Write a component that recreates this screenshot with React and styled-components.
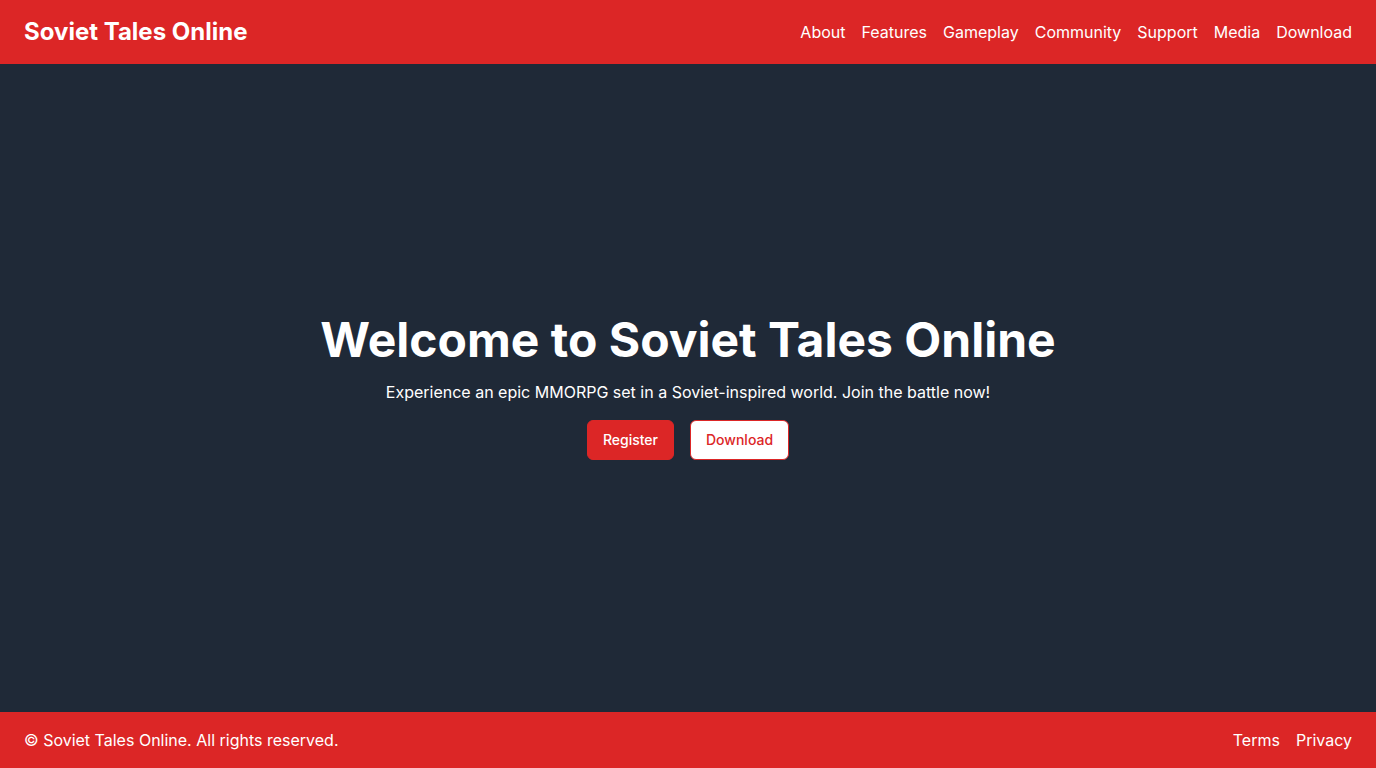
import React from "react";
import styled, { createGlobalStyle } from "styled-components";

const Global = createGlobalStyle`
  html, body { margin: 0; padding: 0; }
  body { font-family: Inter, "Noto Sans", sans-serif; color: #fff; background: #1f2937; }
  * { box-sizing: border-box; }
`;

const Page = styled.div`
  display: flex;
  flex-direction: column;
  min-height: 100vh;
`;

const Header = styled.header`
  height: 64px;
  background: #dc2626;
  display: flex;
  align-items: center;
  justify-content: space-between;
  padding: 0 24px;
`;

const Brand = styled.div`
  font-size: 24px;
  font-weight: 700;
  line-height: 32px;
`;

const Nav = styled.nav`
  display: flex;
  gap: 16px;
`;

const NavLink = styled.a`
  color: #fff;
  text-decoration: none;
  font-size: 16px;
  line-height: 24px;
`;

const Hero = styled.main`
  flex: 1;
  display: flex;
  flex-direction: column;
  align-items: center;
  justify-content: center;
  text-align: center;
`;

const Title = styled.h1`
  margin: 0 0 16px;
  font-size: 48px;
  line-height: 48px;
  font-weight: 700;
`;

const Lead = styled.p`
  margin: 0 0 16px;
  font-size: 16px;
  line-height: 24px;
`;

const Actions = styled.div`
  display: flex;
  gap: 16px;
`;

const Button = styled.button`
  height: 40px;
  padding: 0 15px 1px;
  border-radius: 6px;
  font-family: inherit;
  font-size: 14px;
  font-weight: 500;
  border: 1px solid #dc2626;
  background: ${(p) => (p.$outline ? "#fff" : "#dc2626")};
  color: ${(p) => (p.$outline ? "#dc2626" : "#fff")};
  cursor: pointer;
`;

const Footer = styled.footer`
  height: 56px;
  background: #dc2626;
  display: flex;
  align-items: center;
  justify-content: space-between;
  padding: 0 24px;
  font-size: 16px;
  line-height: 24px;
`;

const FooterLinks = styled.div`
  display: flex;
  gap: 16px;
`;

export default function App() {
  const links = ["About", "Features", "Gameplay", "Community", "Support", "Media", "Download"];
  return (
    <Page>
      <Global />
      <Header>
        <Brand>Soviet Tales Online</Brand>
        <Nav>
          {links.map((l) => (
            <NavLink key={l} href="#">{l}</NavLink>
          ))}
        </Nav>
      </Header>
      <Hero>
        <Title>Welcome to Soviet Tales Online</Title>
        <Lead>Experience an epic MMORPG set in a Soviet-inspired world. Join the battle now!</Lead>
        <Actions>
          <Button>Register</Button>
          <Button $outline>Download</Button>
        </Actions>
      </Hero>
      <Footer>
        <span>© Soviet Tales Online. All rights reserved.</span>
        <FooterLinks>
          <NavLink href="#">Terms</NavLink>
          <NavLink href="#">Privacy</NavLink>
        </FooterLinks>
      </Footer>
    </Page>
  );
}
